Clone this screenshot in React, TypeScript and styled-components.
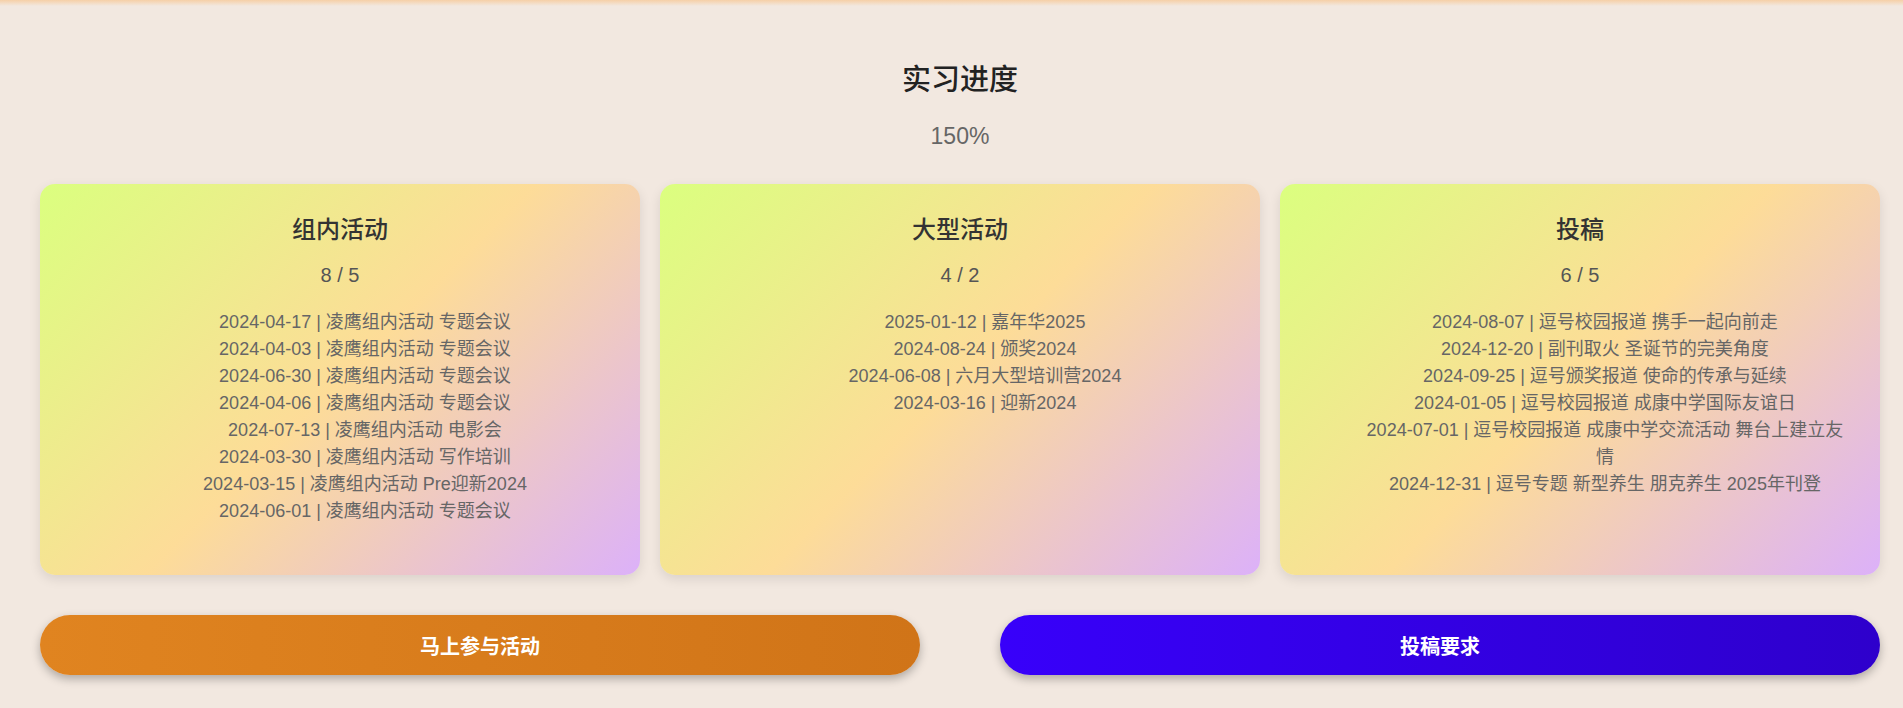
import styled, { createGlobalStyle } from "styled-components";

const GlobalStyle = createGlobalStyle`
  html, body {
    margin: 0;
    padding: 0;
    background: #f2e8e0;
  }
  body {
    font-family: "Liberation Sans", "Noto Sans CJK SC", sans-serif;
    min-height: 100vh;
  }
`;

const TopGlow = styled.div`
  height: 6px;
  background: linear-gradient(to bottom, rgba(246, 206, 164, 0.95), rgba(242, 232, 224, 0));
`;

const Page = styled.main`
  padding: 0 23px 0 40px;
`;

const Title = styled.h1`
  margin: 57px 0 0;
  font-size: 29px;
  line-height: 35px;
  font-weight: 500;
  color: #222;
  text-align: center;
`;

const Percent = styled.p`
  margin: 24px 0 0;
  font-size: 23px;
  line-height: 28px;
  color: #666;
  text-align: center;
`;

const CardGrid = styled.section`
  display: grid;
  grid-template-columns: repeat(3, 1fr);
  gap: 20px;
  margin-top: 34px;
`;

const Card = styled.div`
  padding: 32px 30px 30px;
  border-radius: 15px;
  background: linear-gradient(135deg, #dbff7f 0%, #fddc98 50%, #dcb1f9 100%);
  box-shadow: 0 4px 12px rgba(0, 0, 0, 0.1);
  text-align: center;
`;

const CardTitle = styled.h3`
  margin: 0;
  font-size: 24px;
  line-height: 28px;
  font-weight: 500;
  color: #333;
`;

const CardCount = styled.p`
  margin: 19px 0 0;
  font-size: 20px;
  line-height: 24px;
  color: #555;
`;

const RecordList = styled.ul`
  list-style: none;
  margin: 22px 0 20px;
  padding: 0 0 0 50px;
  font-size: 18px;
  line-height: 27px;
  color: #666;
`;

const ButtonRow = styled.div`
  display: grid;
  grid-template-columns: 1fr 1fr;
  gap: 80px;
  margin-top: 40px;
`;

const ActionButton = styled.button<{ $variant: "orange" | "blue" }>`
  height: 60px;
  border: none;
  border-radius: 30px;
  font-family: inherit;
  font-size: 20px;
  font-weight: 700;
  color: #fff;
  cursor: pointer;
  background: ${(p) =>
    p.$variant === "orange"
      ? "linear-gradient(to right, #e08420, #d07418)"
      : "linear-gradient(to right, #3800fa, #2e00cc)"};
  box-shadow: 0 4px 10px rgba(0, 0, 0, 0.28);
`;

type Section = { title: string; done: number; goal: number; items: string[] };

const sections: Section[] = [
  {
    title: "组内活动",
    done: 8,
    goal: 5,
    items: [
      "2024-04-17 | 凌鹰组内活动 专题会议",
      "2024-04-03 | 凌鹰组内活动 专题会议",
      "2024-06-30 | 凌鹰组内活动 专题会议",
      "2024-04-06 | 凌鹰组内活动 专题会议",
      "2024-07-13 | 凌鹰组内活动 电影会",
      "2024-03-30 | 凌鹰组内活动 写作培训",
      "2024-03-15 | 凌鹰组内活动 Pre迎新2024",
      "2024-06-01 | 凌鹰组内活动 专题会议",
    ],
  },
  {
    title: "大型活动",
    done: 4,
    goal: 2,
    items: [
      "2025-01-12 | 嘉年华2025",
      "2024-08-24 | 颁奖2024",
      "2024-06-08 | 六月大型培训营2024",
      "2024-03-16 | 迎新2024",
    ],
  },
  {
    title: "投稿",
    done: 6,
    goal: 5,
    items: [
      "2024-08-07 | 逗号校园报道 携手一起向前走",
      "2024-12-20 | 副刊取火 圣诞节的完美角度",
      "2024-09-25 | 逗号颁奖报道 使命的传承与延续",
      "2024-01-05 | 逗号校园报道 成康中学国际友谊日",
      "2024-07-01 | 逗号校园报道 成康中学交流活动 舞台上建立友情",
      "2024-12-31 | 逗号专题 新型养生 朋克养生 2025年刊登",
    ],
  },
];

const App = () => {
  return (
    <>
      <GlobalStyle />
      <TopGlow />
      <Page>
        <Title>实习进度</Title>
        <Percent>150%</Percent>
        <CardGrid>
          {sections.map((s) => (
            <Card key={s.title}>
              <CardTitle>{s.title}</CardTitle>
              <CardCount>
                {s.done} / {s.goal}
              </CardCount>
              <RecordList>
                {s.items.map((item, i) => (
                  <li key={i}>{item}</li>
                ))}
              </RecordList>
            </Card>
          ))}
        </CardGrid>
        <ButtonRow>
          <ActionButton $variant="orange">马上参与活动</ActionButton>
          <ActionButton $variant="blue">投稿要求</ActionButton>
        </ButtonRow>
      </Page>
    </>
  );
};

export default App;
